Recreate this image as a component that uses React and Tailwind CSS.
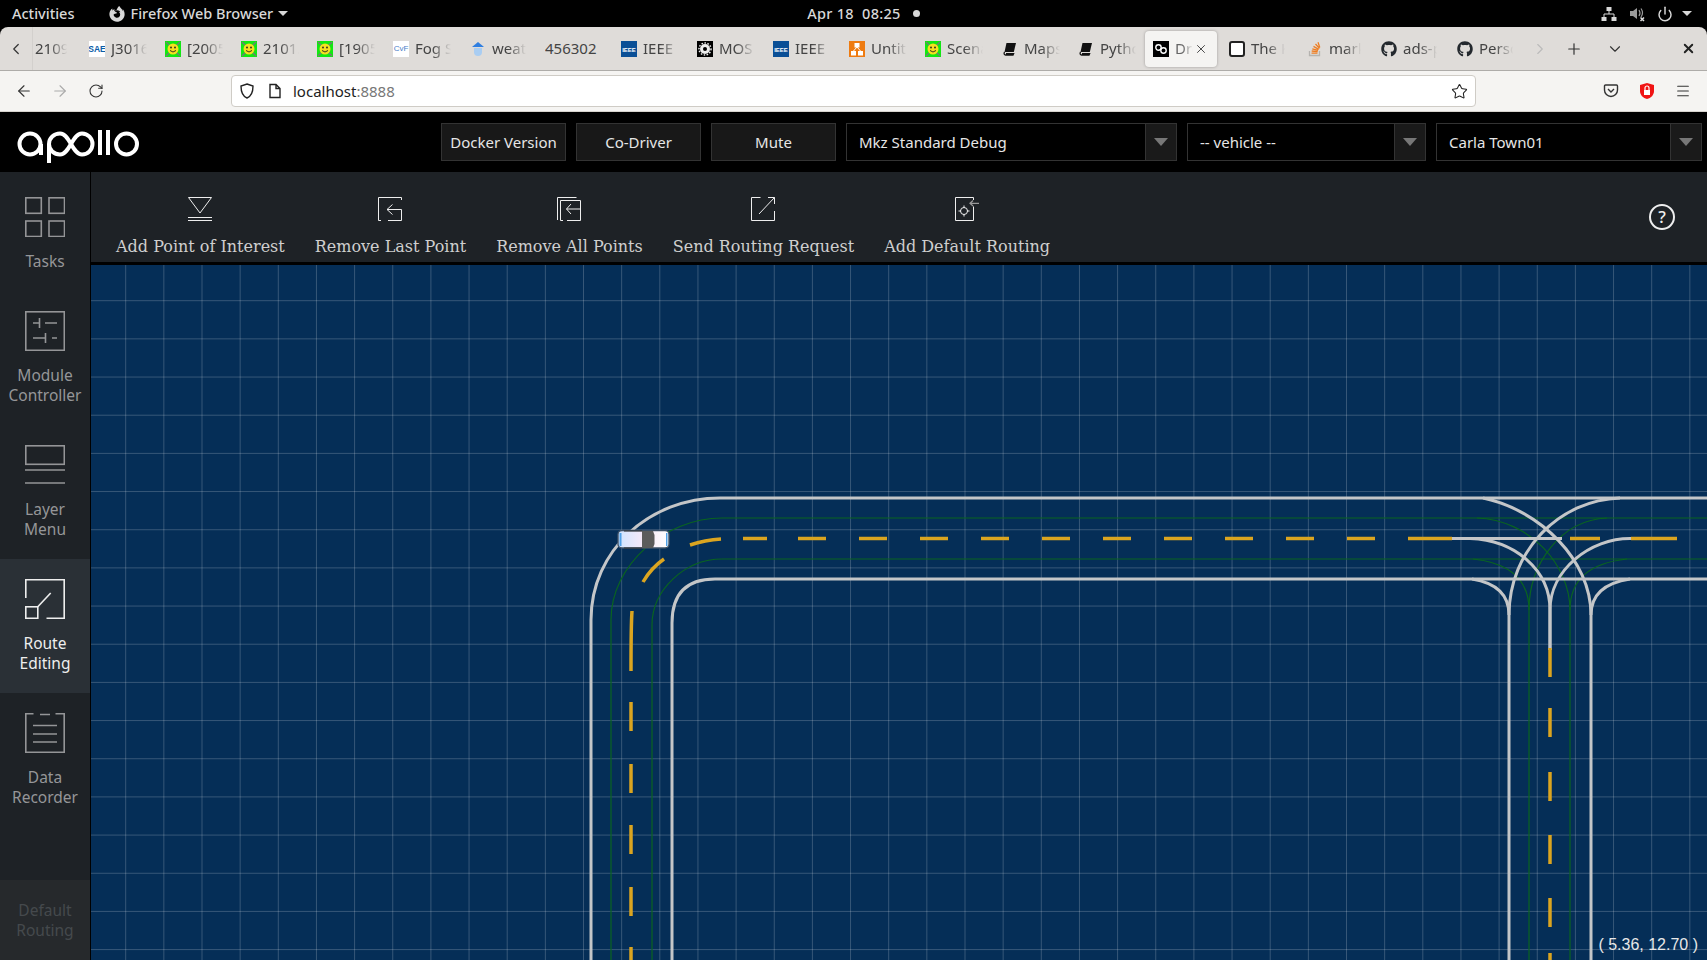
import React from 'react'
import { ArrowLeft, ArrowRight, RotateCw, Star, Plus, X, ChevronLeft, ChevronRight, ChevronDown, Power, Menu } from 'lucide-react'
import { FaGithub, FaFirefoxBrowser } from 'react-icons/fa'

const Smiley = () => (
  <svg width="16" height="16" viewBox="0 0 16 16">
    <rect width="16" height="16" fill="#12e812" />
    <path d="M1 1l14 14M15 1L1 15" stroke="#777" strokeWidth="1.4" />
    <circle cx="8" cy="8" r="5.5" fill="#f5e020" />
    <circle cx="6" cy="6.5" r="0.9" fill="#222" />
    <circle cx="10" cy="6.5" r="0.9" fill="#222" />
    <path d="M5 9.5q3 3 6 0" fill="none" stroke="#222" strokeWidth="0.9" />
  </svg>
)

const Sae = () => (
  <svg width="16" height="16" viewBox="0 0 16 16">
    <rect width="16" height="16" fill="#fff" />
    <text x="8" y="11" textAnchor="middle" fontSize="8.500" fontWeight="700" fontFamily="Liberation Sans" fill="#0b5ea8">SAE</text>
  </svg>
)

const Cvf = () => (
  <svg width="16" height="16" viewBox="0 0 16 16">
    <rect width="16" height="16" fill="#fff" />
    <text x="8" y="10" textAnchor="middle" fontSize="8" fontFamily="Liberation Sans" fill="#4a80c8">CvF</text>
  </svg>
)

const Weather = () => (
  <svg width="16" height="16" viewBox="0 0 16 16">
    <path d="M8 1l6 5H2z" fill="#2f7ee0" />
    <path d="M4 7h8v4a4 4 0 0 1-8 0z" fill="#a9cdf2" />
  </svg>
)

const Ieee = () => (
  <svg width="16" height="16" viewBox="0 0 16 16">
    <rect width="16" height="16" fill="#0a4f96" />
    <text x="8" y="10.5" textAnchor="middle" fontSize="6" fontWeight="700" fontFamily="Liberation Sans" fill="#fff">IEEE</text>
  </svg>
)

const Mos = () => (
  <svg width="16" height="16" viewBox="0 0 16 16">
    <rect width="16" height="16" fill="#000" />
    <circle cx="8" cy="8" r="5" fill="#eee" />
    <circle cx="8" cy="8" r="6" fill="none" stroke="#eee" strokeWidth="1.5" strokeDasharray="1.5 1.5" />
    <circle cx="8" cy="8" r="2" fill="#000" />
  </svg>
)

const Drawio = () => (
  <svg width="16" height="16" viewBox="0 0 16 16">
    <rect width="16" height="16" fill="#ee7b11" />
    <rect x="5.5" y="2" width="5" height="4.5" fill="#fff" />
    <rect x="2" y="10" width="5" height="4.5" fill="#fff" />
    <rect x="9" y="10" width="5" height="4.5" fill="#fff" />
    <path d="M8 6L4.5 10M8 6l3.5 4" stroke="#fff" />
  </svg>
)

const Book = () => (
  <svg width="16" height="16" viewBox="0 0 16 16">
    <path d="M4.5 2H14l-2.2 9H2.5z" fill="#111" />
    <path d="M2.5 11c-1 2 0 3 1 3H11l.6-1.4H4" fill="none" stroke="#111" strokeWidth="1.3" />
  </svg>
)

const Loop = () => (
  <svg width="16" height="16" viewBox="0 0 16 16">
    <rect width="16" height="16" fill="#000" />
    <circle cx="5.5" cy="6.5" r="2.7" fill="none" stroke="#fff" strokeWidth="1.4" />
    <circle cx="10.5" cy="9.5" r="2.7" fill="none" stroke="#fff" strokeWidth="1.4" />
  </svg>
)

const BoxFav = () => <div className="h-[16px] w-[16px] rounded-[3px] border-2 border-[#222] bg-white" />

const StackO = () => (
  <svg width="16" height="16" viewBox="0 0 16 16">
    <path d="M2.5 10v4.5h10V10" fill="none" stroke="#b5b3b0" strokeWidth="1.3" />
    <path d="M4.5 12.2h6M4.7 10l6 .6M5.3 7.8l5.8 1.6M6.5 5.4l5.2 3M8.5 3l4 4.4M11 1.2l1.8 5.3" stroke="#ee7d22" strokeWidth="1.3" />
  </svg>
)

const Git = () => <FaGithub size={16} color="#24292e" />

const TABS = [
  { text: '2109.', w: 'w-[48px] pl-[2px]', tw: 'w-[34px]' },
  { Icon: Sae, text: 'J3016', w: 'w-[76px] pl-[8px]', tw: 'w-[38px]' },
  { Icon: Smiley, text: '[2005', w: 'w-[76px] pl-[8px]', tw: 'w-[38px]' },
  { Icon: Smiley, text: '2101.', w: 'w-[76px] pl-[8px]', tw: 'w-[38px]' },
  { Icon: Smiley, text: '[1905', w: 'w-[76px] pl-[8px]', tw: 'w-[38px]' },
  { Icon: Cvf, text: 'Fog S', w: 'w-[77px] pl-[8px]', tw: 'w-[38px]' },
  { Icon: Weather, text: 'weath', w: 'w-[75px] pl-[8px]', tw: 'w-[36px]' },
  { text: '456302', w: 'w-[76px] pl-[8px]', tw: 'w-[60px]', solid: true },
  { Icon: Ieee, text: 'IEEE', w: 'w-[76px] pl-[8px]', tw: 'w-[38px]' },
  { Icon: Mos, text: 'MOS', w: 'w-[76px] pl-[8px]', tw: 'w-[38px]' },
  { Icon: Ieee, text: 'IEEE', w: 'w-[76px] pl-[8px]', tw: 'w-[38px]' },
  { Icon: Drawio, text: 'Untitle', w: 'w-[76px] pl-[8px]', tw: 'w-[38px]' },
  { Icon: Smiley, text: 'Scena', w: 'w-[77px] pl-[8px]', tw: 'w-[38px]' },
  { Icon: Book, text: 'Maps', w: 'w-[76px] pl-[8px]', tw: 'w-[38px]' },
  { Icon: Book, text: 'Pytho', w: 'w-[75px] pl-[8px]', tw: 'w-[38px]' },
]

const TABS_AFTER = [
  { Icon: BoxFav, text: 'The K', w: 'w-[76px] pl-[6px]', tw: 'w-[36px]' },
  { Icon: StackO, text: 'mark', w: 'w-[74px] pl-[8px]', tw: 'w-[34px]' },
  { Icon: Git, text: 'ads-p', w: 'w-[76px] pl-[8px]', tw: 'w-[36px]' },
  { Icon: Git, text: 'Perso', w: 'w-[78px] pl-[8px]', tw: 'w-[36px]' },
]

function Tab({ tab }) {
  const { Icon, text, w, tw, solid } = tab
  return (
    <div className={`flex h-full shrink-0 items-center gap-[6px] ${w}`}>
      {Icon && <Icon />}
      <span
        className={`overflow-hidden whitespace-nowrap text-[15px] text-[#444] ${tw} ${
          solid ? '' : '[mask-image:linear-gradient(to_right,black_45%,transparent_95%)]'
        }`}
      >
        {text}
      </span>
    </div>
  )
}

function SystemBar() {
  return (
    <div className="relative flex h-[27px] items-center bg-black text-[14.5px] font-medium text-[#d8d8d8]">
      <span className="ml-[12px]">Activities</span>
      <FaFirefoxBrowser size={16} className="ml-[35px]" />
      <span className="ml-[5px]">Firefox Web Browser</span>
      <span className="ml-[5px] h-0 w-0 border-x-[5px] border-t-[5px] border-x-transparent border-t-[#d8d8d8]" />
      <span className="ml-[519px] tracking-[0.3px]">Apr 18&nbsp;&nbsp;08:25</span>
      <span className="ml-[12px] h-[7px] w-[7px] rounded-full bg-[#d8d8d8]" />
      <svg className="ml-[681px]" width="16" height="16" viewBox="0 0 16 16" fill="#d8d8d8">
        <rect x="5.5" y="1" width="5" height="4" />
        <rect x="0.5" y="11" width="5" height="4" />
        <rect x="10.5" y="11" width="5" height="4" />
        <path d="M8 5v3M3 11V8h10v3" fill="none" stroke="#d8d8d8" />
      </svg>
      <svg className="ml-[12px]" width="16" height="16" viewBox="0 0 16 16" fill="#9a9a9a">
        <path d="M1 5h3l4-3v11L4 10H1z" />
        <path d="M10 4q2 3 0 6M12 2.5q3 4.5 0 8.5" fill="none" stroke="#9a9a9a" strokeWidth="1.2" />
        <path d="M11.5 11.5l3.5 3.5M15 11.5L11.5 15" stroke="#e0e0e0" strokeWidth="1.5" />
      </svg>
      <Power size={16} strokeWidth={2.2} className="ml-[12px]" />
      <span className="ml-[9px] h-0 w-0 border-x-[5px] border-t-[5px] border-x-transparent border-t-[#d8d8d8]" />
    </div>
  )
}

function TabStrip() {
  return (
    <div className="flex h-[44px] items-center rounded-t-[8px] border-b border-[#aeaca9] bg-[#dfdcd9]">
      <div className="flex h-full w-[33px] shrink-0 items-center justify-center border-r border-[#d3d0cd]">
        <ChevronLeft size={18} color="#333" strokeWidth={1.6} />
      </div>
      {TABS.map((t, i) => (
        <Tab key={i} tab={t} />
      ))}
      <div className="flex h-[36px] w-[72px] shrink-0 items-center rounded-[4px] bg-[#f5f4f2] pl-[8px] shadow-[0_0_3px_rgba(0,0,0,0.3)]">
        <Loop />
        <span className="ml-[6px] w-[18px] overflow-hidden whitespace-nowrap text-[15px] text-[#666] [mask-image:linear-gradient(to_right,black_40%,transparent)]">
          Dream
        </span>
        <X size={14} color="#333" strokeWidth={1.5} className="ml-[1px]" />
      </div>
      <div className="w-[6px] shrink-0" />
      {TABS_AFTER.map((t, i) => (
        <Tab key={i} tab={t} />
      ))}
      <ChevronRight size={18} color="#bbb" strokeWidth={1.5} className="ml-[4px]" />
      <Plus size={18} color="#333" strokeWidth={1.6} className="ml-[16px]" />
      <ChevronDown size={18} color="#333" strokeWidth={1.5} className="ml-[23px]" />
      <X size={15} color="#222" strokeWidth={3} className="ml-[57px]" />
    </div>
  )
}

function NavBar() {
  return (
    <div className="flex h-[41px] items-center border-b border-[#d6d3cd] bg-[#f5f4f2]">
      <ArrowLeft size={18} color="#333" strokeWidth={1.5} className="ml-[15px]" />
      <ArrowRight size={18} color="#aaa" strokeWidth={1.5} className="ml-[18px]" />
      <RotateCw size={16} color="#333" strokeWidth={1.6} className="ml-[19px]" />
      <div className="ml-[127px] flex h-[32px] w-[1245px] items-center rounded-[4px] border border-[#cfccc6] bg-white text-[15px]">
        <svg className="ml-[7px]" width="16" height="16" viewBox="0 0 16 16" fill="none" stroke="#222" strokeWidth="1.4">
          <path d="M8 1l6 2c0 6-1 10-6 12C3 13 2 9 2 3z" />
        </svg>
        <svg className="ml-[12px]" width="16" height="16" viewBox="0 0 16 16" fill="none" stroke="#222" strokeWidth="1.4">
          <path d="M3 1.5h6l4 4v9H3zM9 1.5v4h4" />
        </svg>
        <span className="ml-[10px] text-[#222]">localhost</span>
        <span className="text-[#777]">:8888</span>
        <Star size={17} color="#222" strokeWidth={1.5} className="ml-auto mr-[7px]" />
      </div>
      <svg className="ml-[127px]" width="16" height="16" viewBox="0 0 16 16" fill="none" stroke="#333" strokeWidth="1.4">
        <path d="M2.5 2h11a1 1 0 0 1 1 1v4a6.5 6.5 0 0 1-13 0V3a1 1 0 0 1 1-1z" />
        <path d="M5 6l3 3 3-3" />
      </svg>
      <svg className="ml-[20px]" width="16" height="18" viewBox="0 0 16 18">
        <path d="M8 1l7 2v6c0 4-3 7-7 8-4-1-7-4-7-8V3z" fill="#f01414" />
        <rect x="5" y="8" width="6" height="5" fill="#fff" />
        <path d="M6 8V6a2 2 0 0 1 4 0v2" fill="none" stroke="#fff" strokeWidth="1.2" />
      </svg>
      <Menu size={16} color="#333" strokeWidth={1.6} className="ml-[20px]" />
    </div>
  )
}

function Logo() {
  return (
    <svg className="ml-[17px] mt-[16px]" width="124" height="36" viewBox="17 130 124 36" fill="none" stroke="#fff" strokeWidth="4">
      <circle cx="30" cy="146" r="10.5" />
      <path d="M41 146v11" />
      <path d="M49 146c0-6 5-10.500 11-10.500 10 0 12 21 22 21 6 0 10.500-5 10.500-10.500S88 135.500 82 135.500c-10 0-12 21-22 21-6 0-11-4.500-11-10.500v19" />
      <path d="M100 132v25M108 132v25" />
      <circle cx="126.500" cy="146" r="10.500" />
    </svg>
  )
}

const Caret = () => <span className="h-0 w-0 border-x-[7px] border-t-[8px] border-x-transparent border-t-[#777]" />

function Button({ label }) {
  return (
    <div className="flex h-[38px] w-[125px] items-center justify-center border border-[#333] bg-[#181818] text-[15px] text-[#e6e6e6]">
      {label}
    </div>
  )
}

function Select({ label, w }) {
  return (
    <div className={`flex h-[38px] items-center border border-[#333] bg-black text-[15px] text-[#e6e6e6] ${w}`}>
      <span className="flex-1 pl-[12px]">{label}</span>
      <div className="flex h-full w-[31px] items-center justify-center border-l border-[#333] bg-[#1a1a1a]">
        <Caret />
      </div>
    </div>
  )
}

function Header() {
  return (
    <div className="flex h-[60px] items-start bg-black">
      <Logo />
      <div className="ml-auto mr-[5px] mt-[11px] flex gap-[10px]">
        <Button label="Docker Version" />
        <Button label="Co-Driver" />
        <Button label="Mute" />
        <Select label="Mkz Standard Debug" w="w-[331px]" />
        <Select label="-- vehicle --" w="w-[239px]" />
        <Select label="Carla Town01" w="w-[266px]" />
      </div>
    </div>
  )
}

const SIDE = '#949597'

const TasksIcon = () => (
  <svg width="40" height="40" viewBox="0 0 40 40" fill="none" stroke={SIDE} strokeWidth="1.6">
    <rect x="0.8" y="0.800" width="15.500" height="15.500" />
    <rect x="24" y="0.800" width="15.500" height="15.500" />
    <rect x="0.8" y="24" width="15.500" height="15.500" />
    <rect x="24" y="24" width="15.500" height="15.500" />
  </svg>
)

const ModuleIcon = () => (
  <svg width="40" height="40" viewBox="0 0 40 40" fill="none" stroke={SIDE} strokeWidth="1.6">
    <rect x="0.8" y="0.800" width="38.500" height="38.500" />
    <path d="M8 12h7M14.500 7v10M20 12h12M8 27h13M20.500 22v10M27 27h5" />
  </svg>
)

const LayerIcon = () => (
  <svg width="40" height="40" viewBox="0 0 40 40" fill="none" stroke={SIDE} strokeWidth="1.6">
    <rect x="0.8" y="0.800" width="38.500" height="18.500" />
    <path d="M0 25h40M0 38h40" />
  </svg>
)

const RouteIcon = () => (
  <svg width="40" height="40" viewBox="0 0 40 40" fill="none" stroke="#eee" strokeWidth="1.6">
    <path d="M0.800 19V0.800H39.200V39.200H21.500" />
    <rect x="0.800" y="27.800" width="12" height="11.500" />
    <path d="M12.800 27.800L25.700 14" />
  </svg>
)

const DataIcon = () => (
  <svg width="40" height="40" viewBox="0 0 40 40" fill="none" stroke={SIDE} strokeWidth="1.6">
    <path d="M8.500 0.800H0.800V39.200H39.200V0.800H30.500M15 1.500h10" />
    <path d="M8 12.500h24M8 21h24M8 29h24" />
  </svg>
)

function SideItem({ Icon, lines, h, pt = 'pt-[20px]', active }) {
  return (
    <div className={`flex flex-col items-center ${h} ${pt} ${active ? 'bg-[#2a3036] text-[#eee]' : 'text-[#959698]'}`}>
      <Icon />
      <div className="mt-[14px] whitespace-nowrap text-center text-[15.5px] leading-[20px]">
        {lines.map((l) => (
          <div key={l}>{l}</div>
        ))}
      </div>
    </div>
  )
}

function Sidebar() {
  return (
    <div className="flex h-[788px] w-[91px] shrink-0 flex-col border-r border-black bg-[#1e2226]">
      <SideItem Icon={TasksIcon} lines={['Tasks']} h="h-[119px]" pt="pt-[25px]" />
      <SideItem Icon={ModuleIcon} lines={['Module', 'Controller']} h="h-[134px]" />
      <SideItem Icon={LayerIcon} lines={['Layer', 'Menu']} h="h-[134px]" />
      <SideItem Icon={RouteIcon} lines={['Route', 'Editing']} h="h-[134px]" active />
      <SideItem Icon={DataIcon} lines={['Data', 'Recorder']} h="h-[134px]" />
      <div className="mt-auto flex h-[80px] flex-col justify-center bg-[#26292c] text-center text-[15.5px] leading-[20px] text-[#45494d]">
        <div>Default</div>
        <div>Routing</div>
      </div>
    </div>
  )
}

const PoiIcon = () => (
  <svg width="24" height="24" viewBox="0 0 24 24" fill="none" stroke="#eee">
    <path d="M0.500 0.500H23.500L12 16z" />
    <path d="M0 20.500h24M0 23.500h24" />
  </svg>
)

const LastIcon = () => (
  <svg width="24" height="24" viewBox="0 0 24 24" fill="none" stroke="#eee">
    <path d="M3 23.500H0.500V0.500H23.500V3M23.500 12.500V23.500H10M23.500 12.500H9M14.500 7.500L9 12.500L14.500 17.500" />
  </svg>
)

const AllIcon = () => (
  <svg width="24" height="24" viewBox="0 0 24 24" fill="none" stroke="#eee">
    <path d="M0.500 23V0.500H19.500M6 23.500H3.500V3.500H23.500V23.500H10M23.500 12H9.500M14 7L9.500 12L14 17" />
  </svg>
)

const SendIcon = () => (
  <svg width="24" height="24" viewBox="0 0 24 24" fill="none" stroke="#eee">
    <path d="M9.500 0.500H0.500V23.500H23.500V14M8 17L23.500 0.500M17 0.500H23.500V7" />
  </svg>
)

const DefaultIcon = () => (
  <svg width="24" height="24" viewBox="0 0 24 24" fill="none" stroke="#eee">
    <path d="M18.500 3V0.500H0.500V23.500H18.500V9.500" />
    <circle cx="9" cy="14" r="3.500" />
    <path d="M9 8.500v2.500M9 17v2.500M3.500 14h2.500M12 14h2.500" />
    <path d="M15 6.300h9M18 3.500l-3 2.800 3 2.800" stroke="#999" strokeWidth="1.300" />
  </svg>
)

const TOOLS = [
  { Icon: PoiIcon, label: 'Add Point of Interest' },
  { Icon: LastIcon, label: 'Remove Last Point' },
  { Icon: AllIcon, label: 'Remove All Points' },
  { Icon: SendIcon, label: 'Send Routing Request' },
  { Icon: DefaultIcon, label: 'Add Default Routing' },
]

function Toolbar() {
  return (
    <div className="flex h-[90px] items-start bg-[#1e2226] pl-[10px]">
      {TOOLS.map(({ Icon, label }) => (
        <div key={label} className="flex flex-col items-center px-[15px] pt-[25px]">
          <Icon />
          <span className="mt-[15px] whitespace-nowrap font-['DejaVu_Serif'] text-[16px] leading-[22px] text-[#cfcfcf]">
            {label}
          </span>
        </div>
      ))}
      <div className="ml-auto mr-[32px] mt-[32px] flex h-[26px] w-[26px] items-center justify-center rounded-full border-2 border-[#eee] text-[17px] font-medium text-[#eee]">
        ?
      </div>
    </div>
  )
}

const V_LINES = Array.from({ length: 42 }, (_, k) => 125.7 + 38.15 * k)
const H_LINES = Array.from({ length: 18 }, (_, k) => 300.7 + 38.17 * k)
const H_DASHES = [798, 859, 920, 981, 1042, 1103, 1164, 1225, 1286, 1347]
const LEFT_DASHES = [702, 764, 825, 887, 947]
const RIGHT_DASHES = [648, 708, 772, 835, 898, 953]

const WHITE_PATHS = [
  'M591 960V620C591 550 650 498 720 498H1707',
  'M672 960V623Q672 579 715 579H1707',
  'M1509 960V615C1509 550 1560 500 1620 498',
  'M1591 960V615C1591 560 1540 510 1483 498',
  'M1550 650V610C1550 570 1515 540 1470 538.500',
  'M1550 650V610C1550 570 1590 538 1631 538.500',
  'M1472 579Q1509 585 1509 615',
  'M1630 579Q1591 585 1591 615',
  'M1452 538.500H1562',
]

const GREEN_PATHS = [
  'M611 960V620C611 565 665 518 722 518H1707',
  'M652 960V625C652 590 685 559 722 559H1707',
  'M1529 960V610C1529 565 1560 520 1607 518',
  'M1570 960V610C1570 565 1530 520 1477 518',
  'M1529 610Q1529 565 1473 559',
  'M1570 610Q1570 565 1627 559',
]

function MapCanvas() {
  return (
    <svg className="block" width="1616" height="695" viewBox="91 265 1616 695">
      <defs>
        <linearGradient id="carBody" x1="0" y1="0" x2="1" y2="0">
          <stop offset="0%" stopColor="#cfe4ff" />
          <stop offset="50%" stopColor="#f6e8f8" />
          <stop offset="100%" stopColor="#ffffff" />
        </linearGradient>
      </defs>
      <rect x="91" y="265" width="1616" height="695" fill="#052e57" />
      {V_LINES.map((x) => (
        <path key={x} d={`M${x} 265V960`} stroke="#fff" strokeOpacity="0.2" />
      ))}
      {H_LINES.map((y) => (
        <path key={y} d={`M91 ${y}H1707`} stroke="#fff" strokeOpacity="0.2" />
      ))}
      <g fill="none" stroke="#0a6420" strokeWidth="1.200">
        {GREEN_PATHS.map((d) => (
          <path key={d} d={d} />
        ))}
      </g>
      <g fill="none" stroke="#c4c6c8" strokeWidth="3">
        {WHITE_PATHS.map((d) => (
          <path key={d} d={d} />
        ))}
      </g>
      <g fill="none" stroke="#dba520" strokeWidth="3.500">
        <path d="M690 545Q705 540 721 539" />
        <path d="M643 582Q651 568 664 559" />
        <path d="M632 611Q631 625 631 671" />
        <path d="M743 538.500H767" />
        {H_DASHES.map((x) => (
          <path key={x} d={`M${x} 538.500h28`} />
        ))}
        <path d="M1408 538.500H1452M1570 538.500H1600M1631 538.500H1677" />
        {LEFT_DASHES.map((y) => (
          <path key={y} d={`M631 ${y}v29`} />
        ))}
        {RIGHT_DASHES.map((y) => (
          <path key={y} d={`M1550 ${y}v29`} />
        ))}
      </g>
      <g>
        <rect x="618" y="530.500" width="51" height="17.500" rx="4" fill="url(#carBody)" stroke="#3d5168" strokeWidth="1.400" />
        <path d="M642 531h11l1.500 4v9l-1.500 4h-11z" fill="#5c5c5c" />
        <path d="M624 531h18M624 548h18" stroke="#333" strokeWidth="1.200" />
        <rect x="619.500" y="533" width="2" height="13" fill="#4f9fe6" />
        <rect x="666" y="533" width="1.500" height="13" fill="#4f9fe6" />
      </g>
    </svg>
  )
}

export default function App() {
  return (
    <div className="h-[960px] w-[1707px] overflow-hidden bg-black font-['Noto_Sans',sans-serif]">
      <SystemBar />
      <TabStrip />
      <NavBar />
      <Header />
      <div className="flex">
        <Sidebar />
        <div className="relative min-w-0 flex-1">
          <Toolbar />
          <div className="mt-[3px]">
            <MapCanvas />
          </div>
          <span className="absolute bottom-[3px] right-[9px] font-['Liberation_Sans'] text-[16px] text-[#e8e8e8]">
            ( 5.36, 12.70 )
          </span>
        </div>
      </div>
    </div>
  )
}
